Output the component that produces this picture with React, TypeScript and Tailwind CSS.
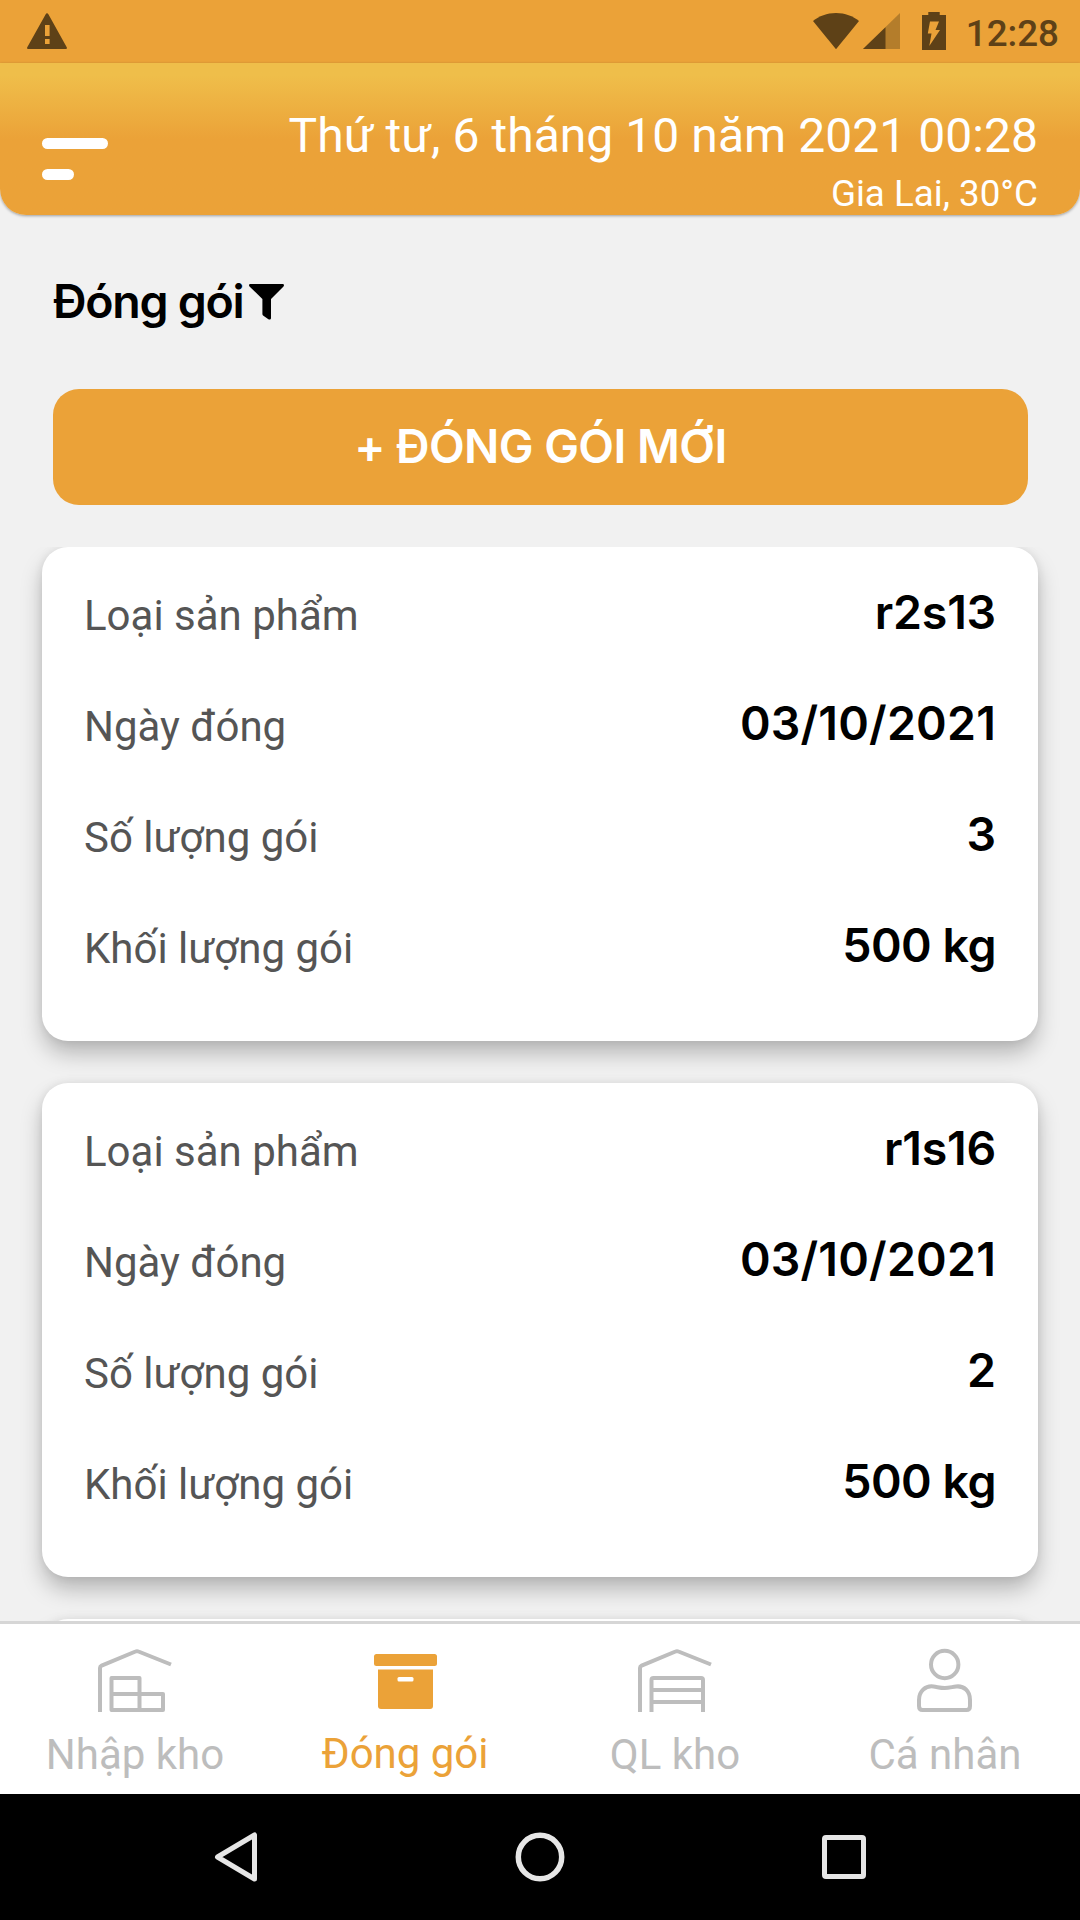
import React from 'react';

type Pack = { type: string; date: string; count: string; weight: string };

const packs: Pack[] = [
  { type: 'r2s13', date: '03/10/2021', count: '3', weight: '500 kg' },
  { type: 'r1s16', date: '03/10/2021', count: '2', weight: '500 kg' },
];

const cardShadow = 'shadow-[0_13px_22px_-1px_rgba(0,0,0,0.25),0_0_10px_rgba(0,0,0,0.08)]';

const StatusBar: React.FC = () => (
  <div className="flex h-[63px] shrink-0 items-start bg-[#eba238] text-[#5e4117]">
    <svg className="ml-[27px] mt-3 h-[38px] w-10" viewBox="0 0 40 38" fill="currentColor">
      <path
        fillRule="evenodd"
        d="M20 1.3c.6 0 1 .4 1.4 1L39.6 35c.7 1.3.2 2-1 2H1.4c-1.2 0-1.7-.7-1-2L18.7 2.3c.3-.6.7-1 1.3-1zM18 13v11h4.6V13zm0 14v5h4.6v-5z"
      />
    </svg>
    <div className="ml-auto mr-[21px] flex">
      <svg className="mt-3 h-[38px] w-[46px]" viewBox="0 0 46 38" fill="currentColor">
        <path d="M23 37.2 0 9C6 4 14 1 23 1s17 3 23 8z" />
      </svg>
      <svg className="ml-1 mt-3 h-[38px] w-[37px]" viewBox="0 0 37 38">
        <path d="M0 37 37 1v36z" fill="#b47d2b" />
        <path d="M0 37 22.5 15.2V37z" fill="currentColor" />
      </svg>
      <svg className="ml-[22px] mt-3 h-[38px] w-6" viewBox="0 0 24 38">
        <path d="M0 3h6.3V0h11.4v3H24v35H0z" fill="currentColor" />
        <path d="M8 9.5h9L13.5 18H18L7.3 34l2.2-12.5H5.8z" fill="#eba238" />
      </svg>
      <span className="ml-5 mt-[11px] text-[36.75px] leading-[46px] font-medium">12:28</span>
    </div>
  </div>
);

const Header: React.FC = () => (
  <header className="flex h-[152px] shrink-0 justify-between rounded-b-[26px] bg-gradient-to-b from-[#efbe4a] from-8% to-[#eba238] to-50% px-[42px] text-white shadow-[0_1px_3px_rgba(0,0,0,0.35)]">
    <div className="flex flex-col gap-5 pt-[75px]">
      <span className="h-[11px] w-[66px] rounded-full bg-white" />
      <span className="h-[11px] w-8 rounded-full bg-white" />
    </div>
    <div className="flex flex-col items-end pt-[45px]">
      <p className="text-[48px] leading-[56px] tracking-[0.05px]">Thứ tư, 6 tháng 10 năm 2021 00:28</p>
      <p className="mt-[9px] text-[36.75px] leading-[42px]">Gia Lai, 30°C</p>
    </div>
  </header>
);

const Row: React.FC<{ label: string; value: string; valueClass?: string }> = ({ label, value, valueClass = '' }) => (
  <div className="flex h-[111px] items-center justify-between">
    <span className="pt-2 text-[42px] text-[#555]">{label}</span>
    <span
      className={`pt-[3px] font-[Inter] text-[46.5px] font-semibold text-black [font-feature-settings:'calt'_0] ${valueClass}`}
    >
      {value}
    </span>
  </div>
);

const PackCard: React.FC<{ pack: Pack }> = ({ pack }) => (
  <div className={`h-[494px] shrink-0 rounded-[26px] bg-white px-[42px] pt-[9px] ${cardShadow}`}>
    <Row label="Loại sản phẩm" value={pack.type} valueClass="tracking-[-0.2px]" />
    <Row label="Ngày đóng" value={pack.date} valueClass="tracking-[0.2px]" />
    <Row label="Số lượng gói" value={pack.count} />
    <Row label="Khối lượng gói" value={pack.weight} valueClass="tracking-[-0.5px]" />
  </div>
);

const iconClass = 'h-[68px] w-[76px]';

const ImportIcon = () => (
  <svg className={iconClass} viewBox="0 0 76 68" fill="none" stroke="currentColor" strokeWidth="4">
    <path d="M3 65V21q0-1.7 1.6-2.4L38.5 4.5q1.500-.7 3 0L74 17.5" />
    <path d="M14.5 31h28v32h-28zM14.5 47H66v16H42.5" strokeLinejoin="round" />
  </svg>
);

const BoxIcon = () => (
  <svg className={iconClass} viewBox="0 0 76 68" fill="currentColor">
    <rect x="7" y="7" width="63" height="12" rx="2.5" />
    <path d="M11 22.5h55V59q0 3-3 3H14q-3 0-3-3z" />
    <rect x="30.5" y="30" width="16" height="4.5" rx="1.5" fill="#fff" />
  </svg>
);

const StoreIcon = () => (
  <svg className={iconClass} viewBox="0 0 76 68" fill="none" stroke="currentColor" strokeWidth="4">
    <path d="M3 65V21q0-1.7 1.6-2.4L38.5 4.5q1.5-.7 3 0L74 17.5" />
    <path d="M14.5 65V33q0-2 2-2H64q2 0 2 2v32M14.5 43H66M14.5 55H66" />
  </svg>
);

const PersonIcon = () => (
  <svg className={iconClass} viewBox="0 0 76 68" fill="none" stroke="currentColor" strokeWidth="4">
    <circle cx="37.7" cy="17.5" r="13.7" />
    <path d="M15.5 63q-3.5 0-3.5-4v-6c0-9 6.5-14.5 14.5-13.5 4 .5 7 1.5 11.2 1.5s7.3-1 11.3-1.5C57 38.5 63 44 63 53v6q0 4-3.5 4z" />
  </svg>
);

const tabs = [
  { label: 'Nhập kho', icon: <ImportIcon /> },
  { label: 'Đóng gói', icon: <BoxIcon />, active: true },
  { label: 'QL kho', icon: <StoreIcon /> },
  { label: 'Cá nhân', icon: <PersonIcon /> },
];

const TabBar: React.FC = () => (
  <nav className="grid h-[173px] shrink-0 grid-cols-4 border-t-[3px] border-[#d6d6d6] bg-white">
    {tabs.map((tab) => (
      <div
        key={tab.label}
        className={`flex flex-col items-center pt-[23px] ${tab.active ? 'text-[#eba238]' : 'text-[#bdbdbd]'}`}
      >
        {tab.icon}
        <span className={`text-[42px] leading-[50px] ${tab.active ? 'mt-3.5' : 'mt-[15px]'}`}>{tab.label}</span>
      </div>
    ))}
  </nav>
);

const SystemNav: React.FC = () => (
  <div className="flex h-[126px] shrink-0 items-center justify-center gap-[244px] bg-black text-[#e6e6e6]">
    <svg className="h-[60px] w-[60px]" viewBox="0 0 60 60" fill="none" stroke="currentColor" strokeWidth="5">
      <path d="M48.5 8v44L11.5 30z" strokeLinejoin="round" />
    </svg>
    <svg className="h-[60px] w-[60px]" viewBox="0 0 60 60" fill="none" stroke="currentColor" strokeWidth="5.5">
      <circle cx="30" cy="30" r="21.7" />
    </svg>
    <svg className="h-[60px] w-[60px]" viewBox="0 0 60 60" fill="none" stroke="currentColor" strokeWidth="5">
      <rect x="10.5" y="10.5" width="39" height="39" rx="1.5" />
    </svg>
  </div>
);

export default function App() {
  return (
    <div className="flex h-[1920px] w-[1080px] flex-col overflow-hidden bg-[#f1f1f1] font-[Roboto,sans-serif]">
      <StatusBar />
      <Header />
      <div className="flex h-[174px] shrink-0 items-center px-[53px]">
        <h1 className="font-[Inter] text-[46.5px] font-semibold tracking-[-1.3px] text-black">Đóng gói</h1>
        <svg className="ml-1.5 h-9 w-[35px]" viewBox="0 0 35 36" fill="#000">
          <path d="M1.3 0h32.4c1.3 0 1.7 1.5.8 2.4L22 15v19c0 1.5-1.5 2-2.6 1.3l-5-3.6c-.7-.5-1-1-1-1.8V15L.5 2.4C-.4 1.5 0 0 1.3 0z" />
        </svg>
      </div>
      <button className="ml-[53px] mr-[52px] h-[116px] shrink-0 rounded-[26px] bg-[#eba238] font-[Inter] text-[46.5px] font-semibold tracking-[-0.6px] text-white [font-feature-settings:'calt'_0]">
        + ĐÓNG GÓI MỚI
      </button>
      <main className="mt-[42px] flex min-h-0 flex-1 flex-col gap-[42px] overflow-hidden px-[42px]">
        {packs.map((pack) => (
          <PackCard key={pack.type} pack={pack} />
        ))}
        {/* top edge of the next card in the list */}
        <div className={`h-[494px] shrink-0 rounded-[26px] bg-white ${cardShadow}`} />
      </main>
      <TabBar />
      <SystemNav />
    </div>
  );
}
